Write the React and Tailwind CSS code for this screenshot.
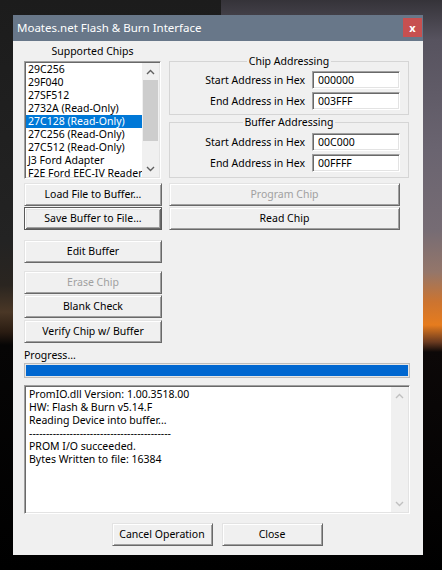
const chips = [
  "29C256",
  "29F040",
  "27SF512",
  "2732A (Read-Only)",
  "27C128 (Read-Only)",
  "27C256 (Read-Only)",
  "27C512 (Read-Only)",
  "J3 Ford Adapter",
  "F2E Ford EEC-IV Reader",
];

const logLines = [
  "PromIO.dll Version: 1.00.3518.00",
  "HW: Flash & Burn v5.14.F",
  "Reading Device into buffer...",
  "------------------------------------------",
  "PROM I/O succeeded.",
  "Bytes Written to file: 16384",
];

function Chevron({ up, color }) {
  return (
    <svg width="9" height="6" viewBox="0 0 9 6">
      <path
        d={up ? "M1 5 L4.5 1.5 L8 5" : "M1 1 L4.5 4.5 L8 1"}
        fill="none"
        stroke={color}
        strokeWidth="1.4"
      />
    </svg>
  );
}

function Btn({ children, className = "", disabled, def }) {
  const edge = def
    ? "border border-[#5a5a5a] shadow-[inset_1px_1px_0_#ffffff,inset_-1px_-1px_0_#696969,inset_2px_2px_0_#e3e3e3,inset_-2px_-2px_0_#a0a0a0]"
    : "border border-t-[#e3e3e3] border-l-[#e3e3e3] border-b-[#696969] border-r-[#696969] shadow-[inset_1px_1px_0_#ffffff,inset_-1px_-1px_0_#a0a0a0]";
  return (
    <div
      className={`${className} ${edge} flex items-center justify-center bg-[#f0f0f0] leading-none ${
        disabled ? "text-[#a0a0a0]" : "text-black"
      }`}
    >
      {children}
    </div>
  );
}

function HexRow({ label, value, className = "" }) {
  return (
    <div className={`flex items-center justify-end gap-[7px] pr-[8px] ${className}`}>
      <span className="leading-none">{label}</span>
      <div className="w-[88px] h-[18px] bg-white border border-t-[#a0a0a0] border-l-[#a0a0a0] border-b-white border-r-white shadow-[inset_1px_1px_0_#696969,inset_-1px_-1px_0_#e3e3e3] flex items-center pl-[5px] leading-none">
        {value}
      </div>
    </div>
  );
}

function Group({ title, children, className = "" }) {
  return (
    <fieldset className={`border border-[#d5d5d5] w-[240px] ${className}`}>
      <legend className="mx-auto px-[2px] leading-[14px]">{title}</legend>
      {children}
    </fieldset>
  );
}

export default function App() {
  return (
    <div className="w-[442px] h-[570px] overflow-hidden pl-[13px] pt-[15px] font-['Noto_Sans',sans-serif] [background:linear-gradient(to_bottom,#1c1c1c_0px,#232323_240px,#2a2520_285px,#4a3726_312px,#2a1c12_332px,#060505_345px,#000_570px)_left_top/50%_100%_no-repeat,linear-gradient(to_bottom,#353339_0px,#57535f_40px,#6a6470_150px,#766c74_230px,#94766a_272px,#cc7430_302px,#e67c1e_325px,#6a3a20_342px,#0c0808_352px,#000_570px)_right_top/50%_100%_no-repeat]">
      <div className="w-[410px] h-[540px] flex flex-col bg-[#f0f0f0]">
        {/* Title bar */}
        <div className="h-[26px] shrink-0 bg-[#687789] flex items-start justify-between pl-[4px] pr-px">
          <span className="text-white text-[11.5px] leading-[26px]">
            Moates.net Flash &amp; Burn Interface
          </span>
          <div className="mt-[3px] w-[19px] h-[19px] bg-[#c75050] flex items-center justify-center text-white text-[11px] font-bold leading-none">
            x
          </div>
        </div>

        {/* Client */}
        <div className="flex-1 flex flex-col pl-[11px] pt-[3px] text-[10.5px] text-black">
          {/* Top row */}
          <div className="flex gap-[8px]">
            <div className="w-[137px] flex flex-col">
              <div className="leading-[14px] h-[14px] text-center mb-[3px]">Supported Chips</div>
              <div className="w-[137px] h-[118px] bg-white border border-t-[#a0a0a0] border-l-[#a0a0a0] border-b-white border-r-white shadow-[inset_1px_1px_0_#696969,inset_-1px_-1px_0_#e3e3e3] p-px flex">
                <div className="flex-1 overflow-hidden flex flex-col">
                  {chips.map((c, i) => (
                    <div
                      key={c}
                      className={`h-[13px] shrink-0 leading-[13px] pl-[2px] whitespace-nowrap ${
                        i === 4 ? "bg-[#0078d7] text-white" : ""
                      }`}
                    >
                      {c}
                    </div>
                  ))}
                </div>
                <div className="w-[17px] bg-[#f0f0f0] flex flex-col">
                  <div className="h-[17px] flex items-center justify-center">
                    <Chevron up color="#606060" />
                  </div>
                  <div className="mx-px h-[61px] bg-[#cdcdcd]" />
                  <div className="flex-1" />
                  <div className="h-[17px] flex items-center justify-center">
                    <Chevron color="#606060" />
                  </div>
                </div>
              </div>
            </div>

            <div className="flex flex-col mt-[10px]">
              <Group title="Chip Addressing" className="pb-[4px]">
                <HexRow label="Start Address in Hex" value="000000" className="mt-[3px]" />
                <HexRow label="End Address in Hex" value="003FFF" className="mt-[3px]" />
              </Group>
              <Group title="Buffer Addressing" className="pb-[5px]">
                <HexRow label="Start Address in Hex" value="00C000" className="mt-[4px]" />
                <HexRow label="End Address in Hex" value="00FFFF" className="mt-[3px]" />
              </Group>
            </div>
          </div>

          {/* Button rows */}
          <div className="flex gap-[7px] mt-[4px]">
            <div className="flex flex-col gap-px">
              <Btn className="w-[138px] h-[23px]">Load File to Buffer...</Btn>
              <Btn className="w-[138px] h-[23px]" def>
                Save Buffer to File...
              </Btn>
            </div>
            <div className="flex flex-col gap-px">
              <Btn className="w-[231px] h-[23px]" disabled>
                Program Chip
              </Btn>
              <Btn className="w-[231px] h-[23px]">Read Chip</Btn>
            </div>
          </div>

          <Btn className="w-[138px] h-[23px] mt-[10px]">Edit Buffer</Btn>
          <Btn className="w-[138px] h-[23px] mt-[8px]" disabled>
            Erase Chip
          </Btn>
          <Btn className="w-[138px] h-[23px] mt-px">Blank Check</Btn>
          <Btn className="w-[138px] h-[23px] mt-[2px]">Verify Chip w/ Buffer</Btn>

          <div className="mt-[5px] leading-[14px] h-[14px]">Progress...</div>
          <div className="mt-px w-[386px] h-[15px] border border-[#bcbcbc] bg-[#e6e6e6] p-px">
            <div className="h-full w-full bg-[#0067d0]" />
          </div>

          {/* Log */}
          <div className="mt-[7px] w-[386px] h-[129px] bg-white border border-t-[#a0a0a0] border-l-[#a0a0a0] border-b-white border-r-white shadow-[inset_1px_1px_0_#696969,inset_-1px_-1px_0_#e3e3e3] p-px flex">
            <div className="flex-1 pl-[3px] pt-[1px] flex flex-col">
              {logLines.map((l, i) => (
                <div key={i} className="h-[13px] leading-[13px] whitespace-nowrap">
                  {l}
                </div>
              ))}
            </div>
            <div className="w-[17px] bg-[#f0f0f0] flex flex-col justify-between">
              <div className="h-[17px] flex items-center justify-center">
                <Chevron up color="#c0c0c0" />
              </div>
              <div className="h-[17px] flex items-center justify-center">
                <Chevron color="#c0c0c0" />
              </div>
            </div>
          </div>

          {/* Bottom buttons */}
          <div className="w-[386px] mt-[9px] flex justify-center gap-[9px]">
            <Btn className="w-[101px] h-[23px]">Cancel Operation</Btn>
            <Btn className="w-[101px] h-[23px]">Close</Btn>
          </div>
        </div>
      </div>
    </div>
  );
}
